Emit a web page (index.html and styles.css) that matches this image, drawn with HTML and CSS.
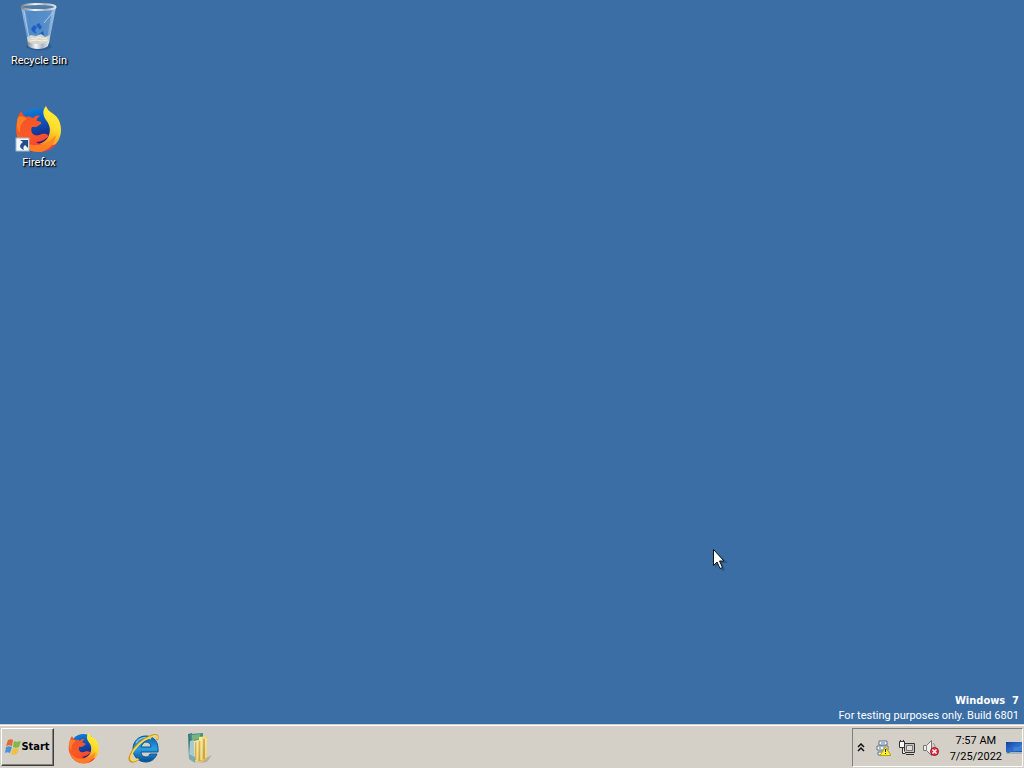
FILE: index.html
```html
<!DOCTYPE html>
<html lang="en">
<head>
<meta charset="utf-8">
<title>Desktop</title>
<link rel="stylesheet" href="styles.css">
</head>
<body>
<svg class="defs" width="0" height="0" aria-hidden="true">
  <defs>
    <linearGradient id="globe" x1="0" y1="0" x2="0.3" y2="1"><stop offset="0" stop-color="#128bdc"/><stop offset="0.4" stop-color="#0a5cc4"/><stop offset="0.7" stop-color="#123a9c"/><stop offset="1" stop-color="#32157c"/></linearGradient>
    <linearGradient id="flame" x1="0.8" y1="0" x2="0.3" y2="1"><stop offset="0" stop-color="#fff23a"/><stop offset="0.4" stop-color="#ffd92b"/><stop offset="0.7" stop-color="#ff9820"/><stop offset="1" stop-color="#f84b34"/></linearGradient>
    <linearGradient id="fox" x1="0.2" y1="0" x2="0.7" y2="1"><stop offset="0" stop-color="#f0502c"/><stop offset="0.5" stop-color="#fb5a24"/><stop offset="1" stop-color="#f53a3c"/></linearGradient>
    <linearGradient id="glass" x1="0" y1="0" x2="1" y2="0"><stop offset="0" stop-color="#a9c8ea"/><stop offset="0.25" stop-color="#5c92cc"/><stop offset="0.7" stop-color="#79a9da"/><stop offset="1" stop-color="#b6cfe9"/></linearGradient>
    <linearGradient id="rim" x1="0" y1="0" x2="1" y2="0"><stop offset="0" stop-color="#77838f"/><stop offset="0.4" stop-color="#f4f7fa"/><stop offset="0.7" stop-color="#aab4be"/><stop offset="1" stop-color="#e2e9ef"/></linearGradient>
    <linearGradient id="ie" x1="0" y1="0" x2="0" y2="1"><stop offset="0" stop-color="#0b5fa8"/><stop offset="0.5" stop-color="#2b9fe0"/><stop offset="1" stop-color="#084a8c"/></linearGradient>
    <linearGradient id="folder" x1="0" y1="0" x2="1" y2="1"><stop offset="0" stop-color="#fff0a0"/><stop offset="1" stop-color="#d9ac3f"/></linearGradient>
    <linearGradient id="screen" x1="0" y1="0" x2="1" y2="1"><stop offset="0" stop-color="#123f9c"/><stop offset="0.5" stop-color="#2f6dcc"/><stop offset="1" stop-color="#1450ab"/></linearGradient>
    <symbol id="firefox" viewBox="0 0 48 48">
      <circle cx="23" cy="23" r="20" fill="url(#globe)"/>
      <path d="M31 1c-4 5-3 9 0 14 5 6 5 13 1 19-5 6-14 7-22 3l-5-3c4 8 11 13 19 13 12 0 22-10 22-22 0-9-4-14-9-17-3-2-5-4-6-7z" fill="url(#flame)"/>
      <path d="M6 6c-3 4-4 9-5 16C0 35 10 47 23 47c8 0 14-3 18-8-7 3-15 2-20-2 6 0 9-3 12-5 1-2-2-4-6-3-4 2-8 2-10-1-1-2-1-4 0-6l4 0 5-3c1-2-1-3-4-3-1-2 1-4 3-5-3-1-5 0-7 2-2-1-5-2-7-1-2-1-4-3-5-6z" fill="url(#fox)"/>
      <path d="M2 27c3 9 11 14 21 13 8-1 14-5 18-10-1 9-8 17-18 17C12 47 4 38 2 27z" fill="#ff8422" opacity=".9"/>
      <path d="M3 12c3-2 7 0 9 2-5 2-7 7-7 14-3-3-4-8-2-16z" fill="#ff8a24" opacity=".8"/>
    </symbol>
  </defs>
</svg>

<main class="desktop">
  <nav class="shortcuts" aria-label="Desktop icons">
    <a class="shortcut" href="#recycle">
      <svg class="shortcut-icon" viewBox="0 0 48 48" aria-hidden="true">
        <path d="M11 44c8 5 18 5 26 0l-3-5H13z" fill="#1f436d" opacity=".4"/>
        <path d="M6 4l7 36c3 4 18 4 21 0l7-36z" fill="url(#glass)" opacity=".85"/>
        <path d="M10 7l5 29c6-4 13-3 17 0l5-29z" fill="#4f88c5" opacity=".75"/>
        <path d="M18 29l-2-3 3-4 3 2-2 4 2 3zM21 22l3-2 3 4-2 3zM24 31l4-3 1 4-4 1z" fill="#1c60c6"/>
        <path d="M12 34l4-2 5 1 5-2 4 3 5-2-1 8c-6 4-17 4-21 0z" fill="#d3d4ca"/>
        <path d="M16 35l4 1 4-2 4 2 4-1M15 38l7-1 4 1 7-1" fill="none" stroke="#f5f3e6"/>
        <path d="M12 38c5 4 17 4 22 0l-1 5c-4 4-16 4-20 0z" fill="url(#rim)"/>
        <path d="M38 9l-9 11M9 8l5 27" fill="none" stroke="#a9c9e8"/>
        <ellipse cx="23.500" cy="4" rx="17" ry="3" fill="#507da8" stroke="url(#rim)" stroke-width="2"/>
      </svg>
      <span>Recycle Bin</span>
    </a>
    <a class="shortcut" href="#firefox-app">
      <svg class="shortcut-icon" viewBox="0 0 48 48" aria-hidden="true">
        <use href="#firefox" width="48" height="48"/>
        <rect x="1" y="33" width="13" height="13" fill="#f4f7fa" stroke="#a3b9cf"/>
        <path d="M5 35h8v8l-3-3c-2 2-2 3-1 5-5-2-5-5-1-8z" fill="#1f4f8d"/>
      </svg>
      <span>Firefox</span>
    </a>
  </nav>
  <div class="build"><strong>Windows&nbsp; 7</strong><span>For testing purposes only. Build 6801</span></div>
  <svg class="cursor" viewBox="0 0 16 24" aria-hidden="true">
    <path d="M3 3v17l4-4 3 7 3-1-3-7h6z" fill="#153a60" opacity=".4"/>
    <path d="M1.500 1.500v16l3.500-3.500 3 6.500 2.500-1-3-6.500H12z" fill="#fff" stroke="#111"/>
  </svg>
</main>

<footer class="taskbar">
  <button class="start" type="button">
    <svg class="flag" viewBox="0 0 16 16" aria-hidden="true">
      <path d="M3 1c2-1 4-1 5 0L7 7C5 6 3 6 1 7z" fill="#e46834"/>
      <path d="M9 2c2 1 4 1 7 0l-2 6c-2 1-4 1-6 0z" fill="#82b84a"/>
      <path d="M1 8c2-1 4-1 6 0l-2 6c-2-1-3-1-5 0z" fill="#4c91d6"/>
      <path d="M8 9c2 1 4 1 6 0l-2 6c-2 1-4 1-6 0z" fill="#f0c13c"/>
    </svg>Start
  </button>
  <div class="launchers">
    <button type="button" aria-label="Firefox"><svg viewBox="0 0 48 48"><use href="#firefox" width="48" height="48"/></svg></button>
    <button type="button" aria-label="Internet Explorer">
      <svg viewBox="0 0 32 32">
        <path d="M18 4C10 4 5 10 5 17c0 8 6 13 13 13 5 0 9-3 11-8h-7c-1 2-2 3-4 3-3 0-5-2-5-5h17C31 10 26 4 18 4zm-5 11c1-3 3-5 5-5 3 0 5 2 5 5z" fill="url(#ie)" fill-rule="evenodd" stroke="#07569b"/>
        <path d="M8 11c3-5 9-7 15-4" fill="none" stroke="#6fc9f4" stroke-width="1.500"/>
        <path d="M29 8c2-5-1-6-6-4C14 7 5 16 2 24c-2 6 2 8 9 3" fill="none" stroke="#c79a2b" stroke-width="2"/>
        <path d="M29 7c1-4-2-4-6-2C14 8 6 16 3 24c-1 5 2 6 7 3" fill="none" stroke="#ffda4b" stroke-width="1.500"/>
      </svg>
    </button>
    <button type="button" aria-label="Windows Explorer">
      <svg viewBox="3 0 32 32">
        <path d="M18 27l9-4-5 7-8 1z" fill="#77746d" opacity=".35"/>
        <path d="M3 2l4-1v23l-3 3z" fill="#397d78"/>
        <path d="M5 2l13-1v7L6 10z" fill="#4b8c89"/>
        <path d="M7 3l8-1v5l-8 1z" fill="#78b57c"/>
        <path d="M5 9l4-1v20l-5-4z" fill="#a5cbd0"/>
        <path d="M9 9l7-2v22l-6 1z" fill="url(#folder)"/>
        <path d="M14 5l8-1v23l-7 4z" fill="url(#folder)"/>
        <path d="M11 10v18M15 9v20M19 7v20" stroke="#ad893a"/>
        <path d="M12 9v20M16 7v21M21 6v20" stroke="#fff3b2"/>
        <path d="M4 22l6 3v6l-6-4z" fill="#7aabb3"/>
      </svg>
    </button>
  </div>
  <div class="tray">
    <button class="chevron" type="button" aria-label="Show hidden icons"><svg viewBox="0 0 8 10"><path d="M1 4l3-3 3 3M1 8l3-3 3 3" fill="none" stroke="#111" stroke-width="1.500"/></svg></button>
    <div class="status">
      <button type="button" aria-label="Hardware warning"><svg viewBox="0 0 16 16">
        <path d="M4 1h8v4H4zM2 6h11v4H2zM3 12h8v3H3z" fill="#f5f6f7" stroke="#657383"/>
        <path d="M6 3h4M4 8h2M8 8h3" stroke="#3b86c7"/>
        <path d="M10.500 7L16 15.500H5z" fill="#fff02d" stroke="#b7a20b"/><path d="M10.500 9v3M10.500 13v1" stroke="#222"/>
      </svg></button>
      <button type="button" aria-label="Network"><svg viewBox="0 0 16 16">
        <path d="M5.500 3.500h10v9h-10zM7 14.500h8" fill="#c5c4c0" stroke="#333"/>
        <path d="M7.500 5.500h6v5h-6z" fill="#deded9" stroke="#777"/>
        <path d="M.5 1.500h5v6h-5zM1.500 0v2M4.500 0v2M3.500 8v5.500h3" fill="#f8f8f5" stroke="#333"/>
      </svg></button>
      <button type="button" aria-label="Volume muted"><svg viewBox="0 0 16 16">
        <path d="M.5 5.500h3l5-5v15l-5-5h-3z" fill="#eeeeeb" stroke="#777"/>
        <path d="M3.500 5.500v5M10 3c1 1 2 2 2 4" fill="none" stroke="#888"/>
        <circle cx="11.500" cy="11.500" r="4" fill="#d8343d" stroke="#a81422"/><path d="M9.500 9.500l4 4m0-4l-4 4" stroke="#fff" stroke-width="1.500"/>
      </svg></button>
    </div>
    <div class="clock"><time>7:57 AM</time><time datetime="2022-07-25">7/25/2022</time></div>
    <button class="show-desktop" type="button" aria-label="Show desktop"><svg viewBox="0 0 16 14"><rect y="1" width="16" height="11" fill="url(#screen)"/><path d="M8 6c3 1 5 0 8-3v7H7z" fill="#5695df" opacity=".6"/><path d="M0 11h16v2H0z" fill="#a8b4c2"/><path d="M1 11h3v1H1z" fill="#388c58"/></svg></button>
  </div>
</footer>
</body>
</html>
```
FILE: styles.css
```css
* { box-sizing: border-box; }

body {
  display: flex;
  flex-direction: column;
  min-height: 100vh;
  margin: 0;
  background: #3a6ea5;
  color: #000;
  font: 11px/16px Roboto, "Noto Sans", sans-serif;
}

button {
  padding: 0;
  border: 0;
  background: none;
  color: inherit;
  font: inherit;
}

svg { display: block; }
.defs { position: absolute; }

.desktop {
  position: relative;
  display: flex;
  flex: 1;
  justify-content: space-between;
}

.shortcuts {
  display: flex;
  flex-direction: column;
  gap: 36px;
  padding-top: 3px;
}

.shortcut {
  display: flex;
  flex-direction: column;
  align-items: center;
  gap: 2px;
  width: 78px;
  color: #fff;
  text-decoration: none;
  text-shadow: 1px 1px 2px #000, 1px 1px 1px #000;
}

.shortcut-icon {
  width: 48px;
  height: 48px;
}

.build {
  display: flex;
  flex-direction: column;
  align-self: flex-end;
  align-items: flex-end;
  padding: 0 5px 1px 0;
  color: #fff;
  line-height: 15px;
}

.build strong {
  font-family: "DejaVu Sans Condensed", sans-serif;
}

.cursor {
  position: absolute;
  top: 548px;
  left: 712px;
  width: 16px;
  height: 24px;
}

.taskbar {
  display: flex;
  align-items: stretch;
  gap: 14px;
  height: 44px;
  padding: 3px 1px 1px;
  border-top: 1px solid #d4d0c8;
  box-shadow: inset 0 1px #fff;
  background: #d4d0c8;
}

.start {
  display: flex;
  align-items: center;
  justify-content: center;
  width: 53px;
  margin-bottom: 1px;
  border: 1px solid;
  border-color: #fff #404040 #404040 #fff;
  box-shadow: inset -1px -1px #808080;
  font-family: "DejaVu Sans Condensed", sans-serif;
  font-weight: bold;
}

.flag {
  width: 16px;
  height: 16px;
}

.launchers {
  display: flex;
  flex: 1;
  align-items: center;
  gap: 28px;
}

.launchers svg {
  width: 32px;
  height: 32px;
}

.tray {
  display: flex;
  align-items: center;
  gap: 4px;
  width: 171px;
  padding-left: 4px;
  border: 1px solid;
  border-color: #808080 #fff #fff #808080;
}

.chevron svg {
  width: 8px;
  height: 10px;
}

.status {
  display: flex;
  gap: 8px;
  padding-left: 6px;
}

.status svg {
  width: 16px;
  height: 16px;
}

.clock {
  display: flex;
  flex-direction: column;
  align-items: center;
  padding-top: 2px;
  margin-left: auto;
}

.show-desktop svg {
  width: 16px;
  height: 14px;
}
```
